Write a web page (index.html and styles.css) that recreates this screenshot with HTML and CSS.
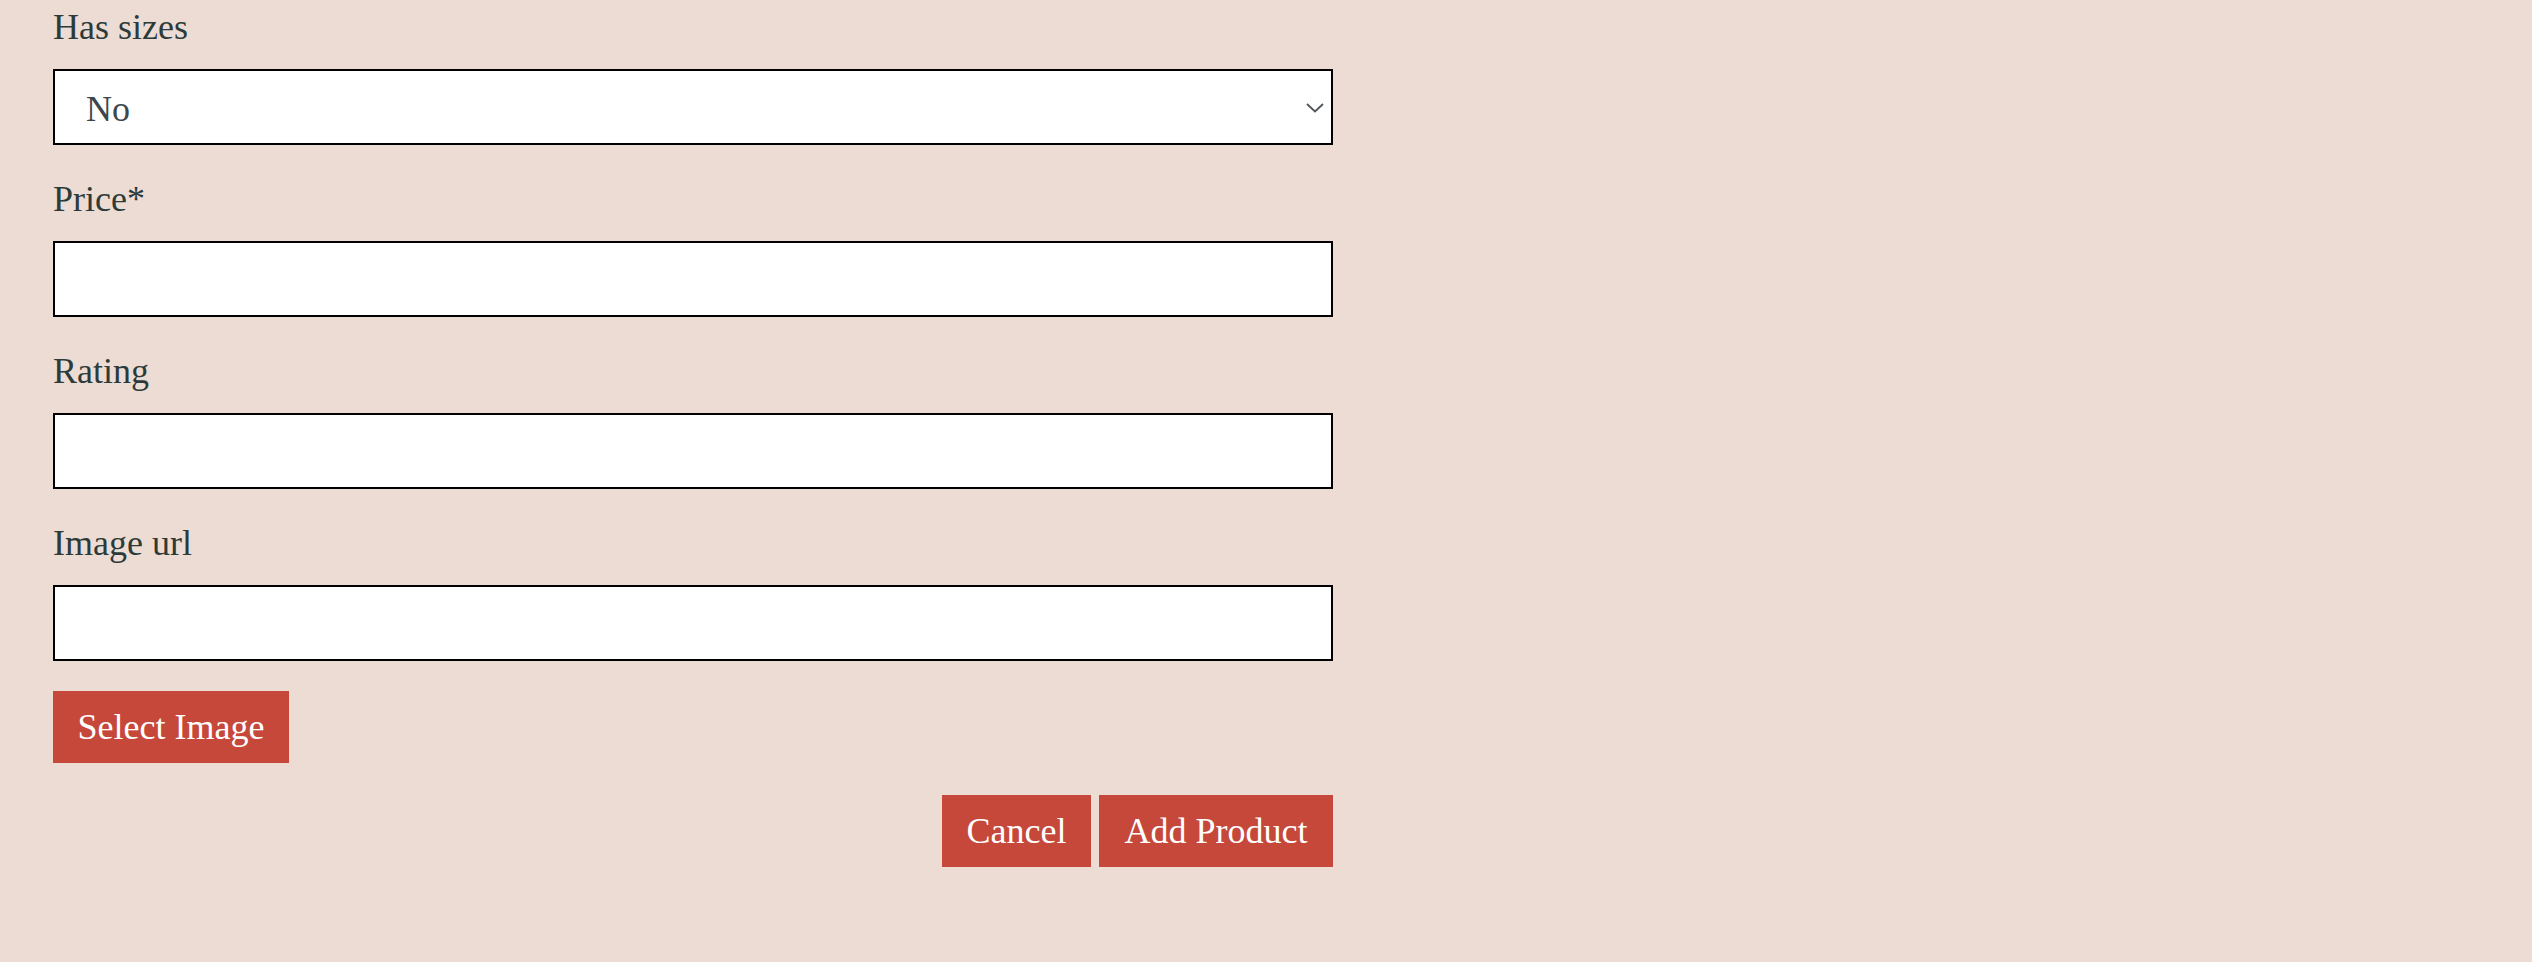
FILE: index.html
```html
<!DOCTYPE html>
<html lang="en">
<head>
<meta charset="utf-8">
<title>Add Product</title>
<link rel="stylesheet" href="styles.css">
</head>
<body>
<form class="form">
  <div class="field">
    <label class="label">Has sizes</label>
    <div class="select">
      <span class="select-value">No</span>
      <svg class="chevron" width="18" height="10" viewBox="0 0 18 10"><polyline points="1,1 9,8.5 17,1" fill="none" stroke="#4f5559" stroke-width="1.8"/></svg>
    </div>
  </div>
  <div class="field">
    <label class="label">Price*</label>
    <input class="input" type="text">
  </div>
  <div class="field">
    <label class="label">Rating</label>
    <input class="input" type="text">
  </div>
  <div class="field">
    <label class="label">Image url</label>
    <input class="input" type="text">
  </div>
  <button type="button" class="btn btn-select">Select Image</button>
  <div class="actions">
    <button type="button" class="btn btn-cancel">Cancel</button>
    <button type="submit" class="btn btn-add">Add Product</button>
  </div>
</form>
</body>
</html>
```
FILE: styles.css
```css
html, body {
  margin: 0;
  padding: 0;
  background: #eddcd4;
}
body {
  font-family: "Liberation Serif", serif;
  color: #2c3b39;
  height: 962px;
}
.form {
  width: 1280px;
  padding: 3px 0 0 53px;
  display: flex;
  flex-direction: column;
}
.field {
  display: flex;
  flex-direction: column;
  margin-bottom: 30px;
}
.field:last-of-type {
  margin-bottom: 32px;
}
.label {
  display: block;
  font-size: 36px;
  line-height: 48px;
  height: 48px;
  margin-bottom: 18px;
  white-space: nowrap;
}
.select {
  position: relative;
  box-sizing: border-box;
  height: 76px;
  border: 2px solid #000;
  background: #fff;
  padding: 5px 0 0 31px;
  font-size: 36px;
  line-height: 67px;
  color: #3c474d;
}
.chevron {
  position: absolute;
  right: 7px;
  top: 32px;
}
.input {
  box-sizing: border-box;
  height: 76px;
  width: 100%;
  margin: 0;
  border: 2px solid #000;
  background: #fff;
  border-radius: 0;
  outline: none;
  font-family: "Liberation Serif", serif;
  font-size: 36px;
}
.btn {
  box-sizing: border-box;
  height: 72px;
  border: none;
  border-radius: 0;
  margin: 0;
  background: #c5483a;
  color: #fff;
  font-family: "Liberation Serif", serif;
  font-size: 36px;
  line-height: 72px;
  padding: 0;
  text-align: center;
  cursor: pointer;
  white-space: nowrap;
}
.btn-select {
  align-self: flex-start;
  width: 236px;
  margin-bottom: 32px;
}
.actions {
  display: flex;
  justify-content: flex-end;
  gap: 8px;
}
.btn-cancel {
  width: 149px;
}
.btn-add {
  width: 234px;
}
```
